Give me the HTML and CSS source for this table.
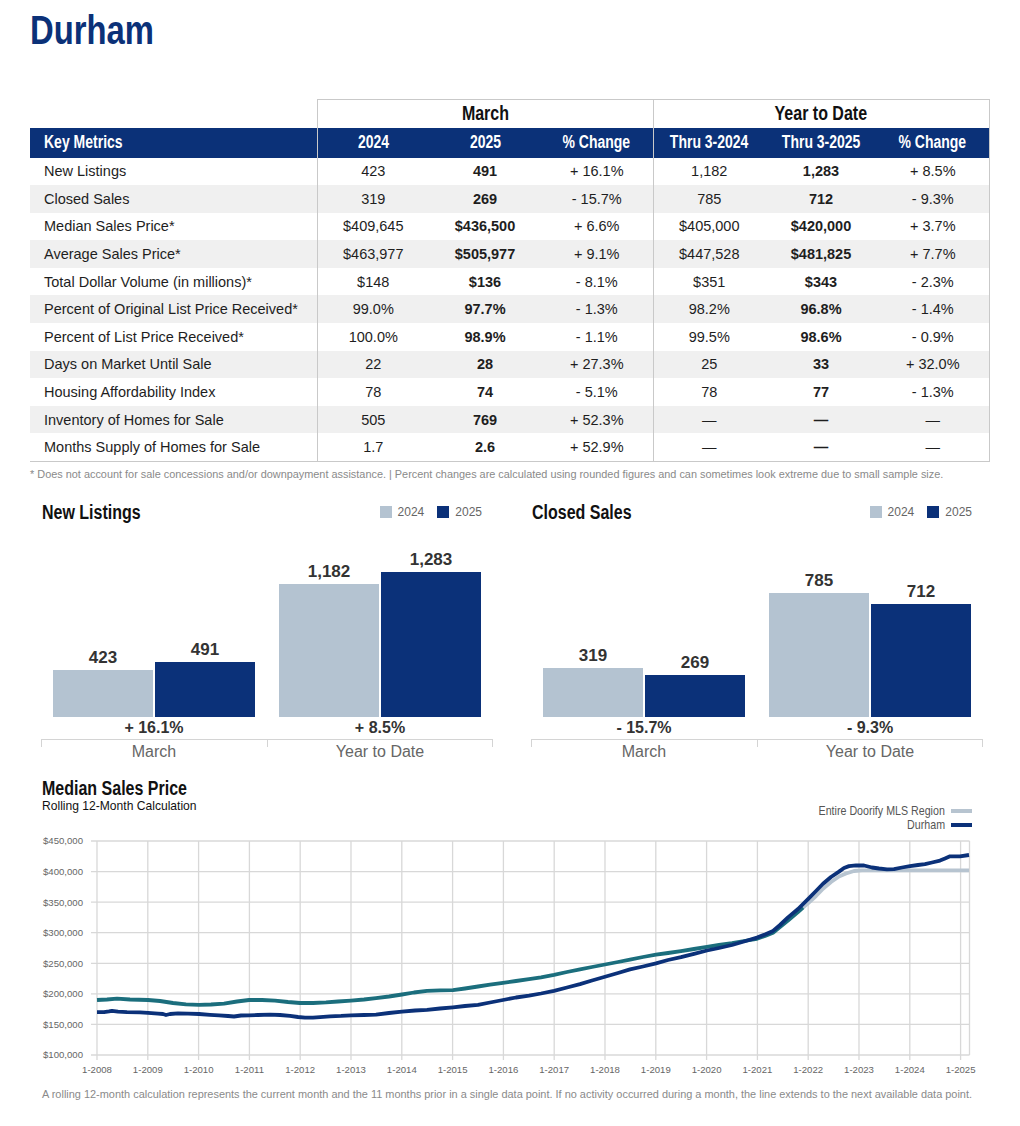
FILE: index.html
```html
<!DOCTYPE html>
<html lang="en">
<head>
<meta charset="utf-8">
<title>Durham</title>
<link rel="stylesheet" href="styles.css">
</head>
<body>
<div class="page">
  <h1 class="title"><span class="cx cx-l">Durham</span></h1>

  <table class="metrics">
    <colgroup><col class="c-label"><col class="c-num"><col class="c-num"><col class="c-num"><col class="c-num"><col class="c-num"><col class="c-num"></colgroup>
    <thead>
      <tr class="group-row"><th class="blank"></th><th colspan="3" class="group"><span class="cx">March</span></th><th colspan="3" class="group"><span class="cx">Year to Date</span></th></tr>
      <tr class="head-row"><th class="lbl"><span class="cx cx-l">Key Metrics</span></th><th class="sep"><span class="cx">2024</span></th><th><span class="cx">2025</span></th><th><span class="cx">% Change</span></th><th class="sep"><span class="cx">Thru 3-2024</span></th><th><span class="cx">Thru 3-2025</span></th><th class="last"><span class="cx">% Change</span></th></tr>
    </thead>
    <tbody>
      <tr><td class="lbl">New Listings</td><td class="sep">423</td><td class="b">491</td><td>+ 16.1%</td><td class="sep">1,182</td><td class="b">1,283</td><td class="last">+ 8.5%</td></tr>
      <tr class="alt"><td class="lbl">Closed Sales</td><td class="sep">319</td><td class="b">269</td><td>- 15.7%</td><td class="sep">785</td><td class="b">712</td><td class="last">- 9.3%</td></tr>
      <tr><td class="lbl">Median Sales Price*</td><td class="sep">$409,645</td><td class="b">$436,500</td><td>+ 6.6%</td><td class="sep">$405,000</td><td class="b">$420,000</td><td class="last">+ 3.7%</td></tr>
      <tr class="alt"><td class="lbl">Average Sales Price*</td><td class="sep">$463,977</td><td class="b">$505,977</td><td>+ 9.1%</td><td class="sep">$447,528</td><td class="b">$481,825</td><td class="last">+ 7.7%</td></tr>
      <tr><td class="lbl">Total Dollar Volume (in millions)*</td><td class="sep">$148</td><td class="b">$136</td><td>- 8.1%</td><td class="sep">$351</td><td class="b">$343</td><td class="last">- 2.3%</td></tr>
      <tr class="alt"><td class="lbl">Percent of Original List Price Received*</td><td class="sep">99.0%</td><td class="b">97.7%</td><td>- 1.3%</td><td class="sep">98.2%</td><td class="b">96.8%</td><td class="last">- 1.4%</td></tr>
      <tr><td class="lbl">Percent of List Price Received*</td><td class="sep">100.0%</td><td class="b">98.9%</td><td>- 1.1%</td><td class="sep">99.5%</td><td class="b">98.6%</td><td class="last">- 0.9%</td></tr>
      <tr class="alt"><td class="lbl">Days on Market Until Sale</td><td class="sep">22</td><td class="b">28</td><td>+ 27.3%</td><td class="sep">25</td><td class="b">33</td><td class="last">+ 32.0%</td></tr>
      <tr><td class="lbl">Housing Affordability Index</td><td class="sep">78</td><td class="b">74</td><td>- 5.1%</td><td class="sep">78</td><td class="b">77</td><td class="last">- 1.3%</td></tr>
      <tr class="alt"><td class="lbl">Inventory of Homes for Sale</td><td class="sep">505</td><td class="b">769</td><td>+ 52.3%</td><td class="sep">—</td><td class="b">—</td><td class="last">—</td></tr>
      <tr><td class="lbl">Months Supply of Homes for Sale</td><td class="sep">1.7</td><td class="b">2.6</td><td>+ 52.9%</td><td class="sep">—</td><td class="b">—</td><td class="last">—</td></tr>
    </tbody>
  </table>
  <p class="footnote">* Does not account for sale concessions and/or downpayment assistance. | Percent changes are calculated using rounded figures and can sometimes look extreme due to small sample size.</p>

  <div class="bar-section">
    <div class="bar-panel">
      <div class="panel-head">
        <h2 class="chart-title"><span class="cx cx-l">New Listings</span></h2>
        <div class="legend"><span class="sw sw-light"></span><span class="lg-txt">2024</span><span class="sw sw-dark"></span><span class="lg-txt">2025</span></div>
      </div>
      <div class="plot">
        <div class="grp">
          <div class="bar-col"><span class="val">423</span><div class="bar light" style="height:47px"></div></div>
          <div class="bar-col"><span class="val">491</span><div class="bar dark" style="height:55px"></div></div>
        </div>
        <div class="grp">
          <div class="bar-col"><span class="val">1,182</span><div class="bar light" style="height:133px"></div></div>
          <div class="bar-col"><span class="val">1,283</span><div class="bar dark" style="height:145px"></div></div>
        </div>
      </div>
      <div class="changes"><span class="chg">+ 16.1%</span><span class="chg">+ 8.5%</span></div>
      <div class="cats"><span class="cat">March</span><span class="cat">Year to Date</span></div>
    </div>

    <div class="bar-panel">
      <div class="panel-head">
        <h2 class="chart-title"><span class="cx cx-l">Closed Sales</span></h2>
        <div class="legend"><span class="sw sw-light"></span><span class="lg-txt">2024</span><span class="sw sw-dark"></span><span class="lg-txt">2025</span></div>
      </div>
      <div class="plot">
        <div class="grp">
          <div class="bar-col"><span class="val">319</span><div class="bar light" style="height:49px"></div></div>
          <div class="bar-col"><span class="val">269</span><div class="bar dark" style="height:42px"></div></div>
        </div>
        <div class="grp">
          <div class="bar-col"><span class="val">785</span><div class="bar light" style="height:124px"></div></div>
          <div class="bar-col"><span class="val">712</span><div class="bar dark" style="height:113px"></div></div>
        </div>
      </div>
      <div class="changes"><span class="chg">- 15.7%</span><span class="chg">- 9.3%</span></div>
      <div class="cats"><span class="cat">March</span><span class="cat">Year to Date</span></div>
    </div>
  </div>

  <div class="line-section">
    <div class="line-head">
      <div class="line-titles">
        <h2 class="chart-title"><span class="cx cx-l">Median Sales Price</span></h2>
        <div class="subtitle"><span class="cx cx-l">Rolling 12-Month Calculation</span></div>
      </div>
      <div class="line-legend">
        <div class="ll-item"><span class="cx cx-r">Entire Doorify MLS Region</span><span class="ll-line ll-region"></span></div>
        <div class="ll-item"><span class="cx cx-r">Durham</span><span class="ll-line ll-durham"></span></div>
      </div>
    </div>
    <svg class="line-chart" width="1020" height="255" viewBox="0 0 1020 255" xmlns="http://www.w3.org/2000/svg">
      <g stroke="#d8d8d8" stroke-width="1.3" fill="none">
        <line x1="91" y1="9" x2="969.5" y2="9"/>
        <line x1="91" y1="39.6" x2="969.5" y2="39.6"/>
        <line x1="91" y1="70.1" x2="969.5" y2="70.1"/>
        <line x1="91" y1="100.7" x2="969.5" y2="100.7"/>
        <line x1="91" y1="131.3" x2="969.5" y2="131.3"/>
        <line x1="91" y1="161.9" x2="969.5" y2="161.9"/>
        <line x1="91" y1="192.4" x2="969.5" y2="192.4"/>
        <line x1="91" y1="223" x2="969.5" y2="223"/>
        <line x1="97" y1="9" x2="97" y2="228"/>
        <line x1="147.8" y1="9" x2="147.8" y2="228"/>
        <line x1="198.6" y1="9" x2="198.6" y2="228"/>
        <line x1="249.4" y1="9" x2="249.4" y2="228"/>
        <line x1="300.2" y1="9" x2="300.2" y2="228"/>
        <line x1="351" y1="9" x2="351" y2="228"/>
        <line x1="401.8" y1="9" x2="401.8" y2="228"/>
        <line x1="452.6" y1="9" x2="452.6" y2="228"/>
        <line x1="503.4" y1="9" x2="503.4" y2="228"/>
        <line x1="554.2" y1="9" x2="554.2" y2="228"/>
        <line x1="605" y1="9" x2="605" y2="228"/>
        <line x1="655.8" y1="9" x2="655.8" y2="228"/>
        <line x1="706.6" y1="9" x2="706.6" y2="228"/>
        <line x1="757.4" y1="9" x2="757.4" y2="228"/>
        <line x1="808.2" y1="9" x2="808.2" y2="228"/>
        <line x1="859" y1="9" x2="859" y2="228"/>
        <line x1="909.8" y1="9" x2="909.8" y2="228"/>
        <line x1="960.6" y1="9" x2="960.6" y2="228"/>
        <line x1="969.5" y1="9" x2="969.5" y2="223"/>
      </g>
      <g class="ylab" text-anchor="end">
        <text x="83" y="12.4">$450,000</text>
        <text x="83" y="43">$400,000</text>
        <text x="83" y="73.5">$350,000</text>
        <text x="83" y="104.1">$300,000</text>
        <text x="83" y="134.7">$250,000</text>
        <text x="83" y="165.3">$200,000</text>
        <text x="83" y="195.8">$150,000</text>
        <text x="83" y="226.4">$100,000</text>
      </g>
      <g class="xlab" text-anchor="middle">
        <text x="97" y="240.5">1-2008</text>
        <text x="147.8" y="240.5">1-2009</text>
        <text x="198.6" y="240.5">1-2010</text>
        <text x="249.4" y="240.5">1-2011</text>
        <text x="300.2" y="240.5">1-2012</text>
        <text x="351" y="240.5">1-2013</text>
        <text x="401.8" y="240.5">1-2014</text>
        <text x="452.6" y="240.5">1-2015</text>
        <text x="503.4" y="240.5">1-2016</text>
        <text x="554.2" y="240.5">1-2017</text>
        <text x="605" y="240.5">1-2018</text>
        <text x="655.8" y="240.5">1-2019</text>
        <text x="706.6" y="240.5">1-2020</text>
        <text x="757.4" y="240.5">1-2021</text>
        <text x="808.2" y="240.5">1-2022</text>
        <text x="859" y="240.5">1-2023</text>
        <text x="909.8" y="240.5">1-2024</text>
        <text x="960.6" y="240.5">1-2025</text>
      </g>
      <polyline fill="none" stroke="#b7c4d0" stroke-width="3.8" stroke-linejoin="round" points="803,75.5 808,71.4 816,64 823,56.7 831,50 839,44.5 846,41.5 854,39 862,38.4 869,38.4 969,38.4"/>
      <polyline fill="none" stroke="#1b6e7d" stroke-width="3.8" stroke-linejoin="round" points="97,168 107,167.5 117,166.7 130,167.5 148,168 160,169 173,171 186,172.3 199,172.9 211,172.5 224,171.6 237,169.5 249,168 262,168 275,168.6 288,170 300,171 313,171 326,170.4 338,169.5 351,168.6 364,167.5 376,166.1 389,164.5 402,162.5 414,160.5 427,158.8 440,158.4 453,158.2 465,156.5 478,154.5 490,152.7 503,150.9 516,149 529,147.2 541,145.3 554,142.9 567,140 580,137.4 592,135 605,132.5 618,130 630,127.6 643,125 656,122.7 668,121 681,119.1 694,117 707,114.8 719,113 732,111.1 744,109 757,106.8 765,104 773,100.7 780,95 788,88.5 798,80 803,75.5"/>
      <polyline fill="none" stroke="#0b3179" stroke-width="3.8" stroke-linejoin="round" points="97,180.2 104,180.2 109,179.4 112,178.8 118,179.6 127,180.2 140,180.4 148,180.8 158,181.6 163,182 166,183 170,182 178,181.4 188,181.6 199,182 210,182.8 219,183.3 228,184 234,184.5 241,183.5 249,183.3 258,183 270,182.6 280,183 290,183.9 298,185 305,185.7 313,185.7 320,185.1 330,184.3 341,183.9 351,183.3 364,183 376,182.6 389,181 402,179.6 415,178.5 427,177.8 440,176.5 453,175.3 465,174 478,172.9 490,170.5 503,168 516,165.5 529,163.7 541,161.5 554,158.8 567,155.5 580,152.1 592,148.5 605,144.7 618,141 630,137.4 643,134.5 656,131.3 668,128 681,125.2 694,121.8 707,118.5 719,116 732,113 744,109.5 757,105.6 765,102.5 773,98.9 780,93 788,85.4 798,77 808,67.1 816,59 823,51.8 831,45 839,39.6 844,36 849,34.1 856,33.3 864,33.5 872,35.5 879,36.5 887,37.3 894,37.1 902,35.5 910,34.1 918,33 925,32.2 932,30.5 940,28.6 945,26.5 950,24.3 960,24.3 969,23"/>
    </svg>
    <p class="line-note">A rolling 12-month calculation represents the current month and the 11 months prior in a single data point. If no activity occurred during a month, the line extends to the next available data point.</p>
  </div>
</div>
</body>
</html>
```

FILE: styles.css
```css
* { box-sizing: border-box; }
html, body { margin: 0; padding: 0; background: #fff; }
body {
  width: 1020px;
  font-family: "Liberation Sans", Arial, sans-serif;
  color: #222;
}
.page { width: 1020px; }

/* condensed look: Helvetica Condensed approximated by a horizontally narrowed Liberation Sans */
.cx {
  display: inline-block;
  white-space: nowrap;
  transform: scaleX(0.8);
  transform-origin: center center;
}
.cx-l { transform-origin: left center; }
.cx-r { transform-origin: right center; }

.title {
  margin: 0;
  padding: 10px 0 0 30px;
  font-size: 41px;
  line-height: 41px;
  font-weight: 700;
  color: #0b3178;
}

/* Table */
.metrics {
  margin: 48px 0 0 30px;
  width: 959px;
  border-collapse: collapse;
  table-layout: fixed;
}
.c-label { width: 287px; }
.c-num { width: 112px; }
.metrics th { font-weight: 700; text-align: center; padding: 0; white-space: nowrap; }
.group-row th { height: 28px; font-size: 20px; color: #111; }
.group-row .group { border: 1px solid #c9c9c9; border-bottom: none; }
.group-row .blank { border: none; }
.head-row th {
  height: 30px;
  font-size: 17.5px;
  background: #0b3178;
  color: #fff;
}
.head-row th.lbl { text-align: left; padding-left: 14px; }
.metrics td {
  height: 27.6px;
  padding: 0;
  font-size: 14.5px;
  text-align: center;
  color: #1e1e1e;
}
.metrics td.lbl { text-align: left; padding-left: 14px; }
.metrics td.b { font-weight: 700; }
.metrics .sep { border-left: 1px solid #c9c9c9; }
.metrics .last { border-right: 1px solid #c9c9c9; }
.metrics tr.alt td { background: #f0f0f0; }
.metrics tbody tr:last-child td { border-bottom: 1px solid #c9c9c9; }

.footnote {
  margin: 5px 0 0 30px;
  font-size: 10.9px;
  line-height: 14px;
  color: #8a8a8a;
}

/* Bar charts */
.bar-section {
  display: flex;
  gap: 38px;
  padding-left: 41px;
  margin-top: 19px;
}
.bar-panel { width: 452px; display: flex; flex-direction: column; }
.panel-head {
  display: flex;
  justify-content: space-between;
  align-items: center;
  padding: 0 11px 0 1px;
  height: 24px;
}
.chart-title {
  margin: 0;
  font-size: 20px;
  line-height: 24px;
  font-weight: 700;
  color: #111;
}
.legend { display: flex; align-items: center; font-size: 12px; color: #666; }
.sw { width: 12px; height: 12px; display: inline-block; margin-right: 6px; }
.sw-light { background: #b4c3d1; }
.sw-dark { background: #0b3179; margin-left: 13px; }
.plot { height: 193px; display: flex; }
.grp { flex: 1; display: flex; justify-content: center; align-items: flex-end; gap: 2px; }
.bar-col { width: 100px; display: flex; flex-direction: column; align-items: center; }
.val { font-size: 17px; line-height: 20px; font-weight: 700; color: #333; margin-bottom: 2px; }
.bar { width: 100%; }
.bar.light { background: #b4c3d1; }
.bar.dark { background: #0b3179; }
.changes { display: flex; margin-top: 1px; height: 21px; }
.chg { flex: 1; text-align: center; font-size: 16px; line-height: 20px; font-weight: 700; color: #333; }
.cats { display: flex; border-top: 1px solid #d4d4d4; }
.cat {
  flex: 1;
  text-align: center;
  font-size: 16px;
  line-height: 20px;
  padding-top: 2px;
  color: #666;
  background: linear-gradient(#d4d4d4, #d4d4d4) left top / 1px 7px no-repeat;
}
.cat:last-child {
  background:
    linear-gradient(#d4d4d4, #d4d4d4) left top / 1px 7px no-repeat,
    linear-gradient(#d4d4d4, #d4d4d4) right top / 1px 7px no-repeat;
}

/* Line chart */
.line-section { margin-top: 16px; }
.line-head {
  display: flex;
  justify-content: space-between;
  align-items: flex-start;
  padding: 0 48px 0 42px;
  height: 54px;
}
.line-titles .chart-title { line-height: 20px; }
.subtitle { font-size: 13px; line-height: 16px; color: #111; }
.subtitle .cx { transform: scaleX(0.93); }
.line-legend { margin-top: 26px; font-size: 13.5px; color: #555; }
.line-legend .cx { transform: scaleX(0.79); }
.ll-item { display: flex; justify-content: flex-end; align-items: center; height: 14px; line-height: 14px; }
.ll-line { display: inline-block; width: 21px; height: 4px; margin-left: 6px; flex: none; }
.ll-region { background: #b7c4d0; }
.ll-durham { background: #0b3179; }
.line-chart { display: block; }
.line-chart text { font-family: "Liberation Sans", Arial, sans-serif; font-size: 9.6px; fill: #666; }
.line-note {
  margin: 0 0 0 42px;
  font-size: 10.95px;
  line-height: 14px;
  color: #8a8a8a;
}
```
